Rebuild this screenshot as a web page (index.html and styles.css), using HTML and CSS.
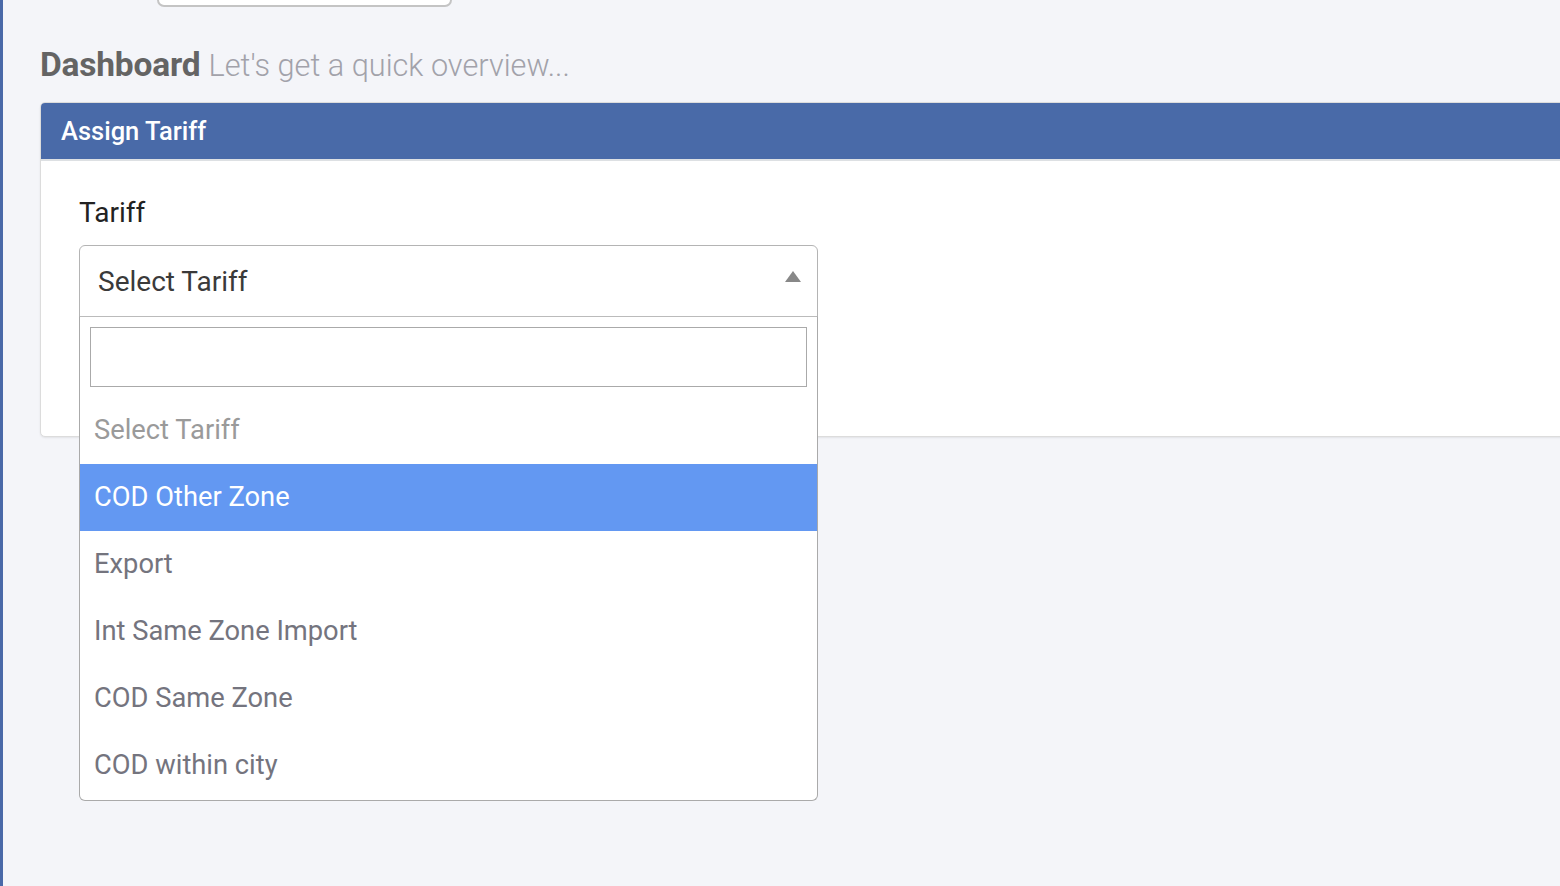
FILE: index.html
```html
<!DOCTYPE html>
<html lang="en">
<head>
<meta charset="utf-8">
<title>Dashboard</title>
<link rel="stylesheet" href="styles.css">
</head>
<body>
<div class="layout">
  <div class="sidebar-edge"></div>
  <main class="main">
    <div class="topbar"><div class="top-search"></div></div>
    <h1 class="page-title">Dashboard <small class="page-sub">Let's get a quick overview...</small></h1>
    <section class="card">
      <header class="card-head">Assign Tariff</header>
      <div class="card-body">
        <label class="field-label">Tariff</label>
        <div class="select-wrap">
          <div class="select-box">
            <span class="select-value">Select Tariff</span>
            <span class="select-arrow"></span>
          </div>
          <div class="dropdown">
            <div class="search-wrap"><input class="search-input" type="text"></div>
            <ul class="options">
              <li class="option placeholder">Select Tariff</li>
              <li class="option active">COD Other Zone</li>
              <li class="option">Export</li>
              <li class="option">Int Same Zone Import</li>
              <li class="option">COD Same Zone</li>
              <li class="option">COD within city</li>
            </ul>
          </div>
        </div>
      </div>
    </section>
  </main>
</div>
</body>
</html>
```
FILE: styles.css
```css
* { box-sizing: border-box; }
html, body { margin: 0; padding: 0; }
body {
  background: #f4f5f9;
  font-family: Roboto, "Liberation Sans", sans-serif;
  overflow: hidden;
  height: 886px;
}
.layout { display: flex; height: 886px; }
.sidebar-edge { width: 3px; background: #4a69a8; flex: none; }
.main { flex: 1; padding-left: 37px; min-width: 0; }
.topbar {
  display: flex;
  align-items: flex-end;
  height: 7px;
  padding-left: 117px;
}
.top-search {
  flex: none;
  width: 295px;
  height: 40px;
  background: #fff;
  border: 2px solid #c4c4c4;
  border-radius: 7px;
}
.page-title {
  margin: 38px 0 0;
  height: 57px;
  line-height: 40px;
  font-size: 33.5px;
  font-weight: 700;
  color: #646464;
  letter-spacing: -0.2px;
}
.page-sub {
  font-size: 30.7px;
  font-weight: 300;
  color: #a2a2aa;
  letter-spacing: 0;
}
.card {
  margin-right: -20px;
  background: #fff;
  border: 1px solid #dcdcdc;
  border-radius: 5px 0 0 5px;
  box-shadow: 0 1px 2px rgba(0,0,0,0.08);
}
.card-head {
  background: #496aa8;
  color: #fff;
  height: 58px;
  line-height: 56px;
  padding-left: 20px;
  font-size: 25.5px;
  font-weight: 500;
  border-bottom: 2px solid #dde0e3;
  border-radius: 4px 0 0 0;
}
.card-body {
  height: 275px;
  padding: 36px 0 0 38px;
}
.field-label {
  display: block;
  font-size: 28px;
  line-height: 32px;
  color: #222;
  margin-bottom: 16px;
}
.select-wrap { position: relative; width: 739px; }
.select-box {
  height: 72px;
  border: 1px solid #b4b4b4;
  border-radius: 6px 6px 0 0;
  display: flex;
  align-items: center;
  justify-content: space-between;
  padding: 0 16px 0 18px;
}
.select-value { font-size: 28px; color: #3a3a3a; }
.select-arrow {
  width: 0; height: 0;
  border-left: 8px solid transparent;
  border-right: 8px solid transparent;
  border-bottom: 11px solid #888;
  margin-top: -10px;
}
.dropdown {
  position: absolute;
  top: 71px;
  left: 0;
  width: 739px;
  background: #fff;
  border: 1px solid #aaa;
  border-top: 1px solid #bbb;
  border-radius: 0 0 6px 6px;
  padding-bottom: 1px;
}
.search-wrap { padding: 10px; }
.search-input {
  display: block;
  width: 100%;
  height: 60px;
  border: 1px solid #aaa;
  outline: none;
  margin: 0;
  font-size: 27px;
}
.options { list-style: none; margin: 0; padding: 0; }
.option {
  height: 67px;
  line-height: 67px;
  padding-left: 14px;
  font-size: 27.3px;
  color: #74747e;
}
.option.placeholder { color: #9a9a9a; }
.option.active { background: #6398f2; color: #fff; }
```
